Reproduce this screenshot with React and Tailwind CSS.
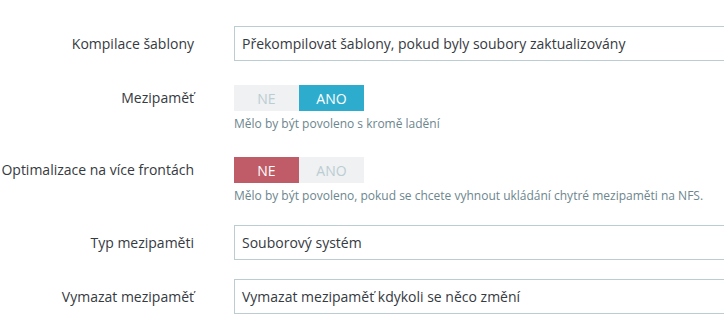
const ToggleSwitch = ({ value }) => {
  const on = value === 'ANO';
  return (
    <div className="flex h-[26px] w-[130px]">
      <span
        className={`flex w-[65px] items-center justify-center text-[14px] ${
          on ? 'bg-[#eff1f2] text-[#bbcdd2]' : 'bg-[#c05c67] text-white'
        }`}
      >
        NE
      </span>
      <span
        className={`flex w-[65px] items-center justify-center text-[14px] ${
          on ? 'bg-[#2eacce] text-white' : 'bg-[#eff1f2] text-[#bbcdd2]'
        }`}
      >
        ANO
      </span>
    </div>
  );
};

const TextField = ({ value }) => (
  <div className="flex h-[35px] w-[540px] shrink-0 items-center border border-[#bbcdd2] bg-white px-[7px] text-[14px] text-[#363a41]">
    {value}
  </div>
);

const Label = ({ children, className = '' }) => (
  <div className={`w-[194px] shrink-0 text-right text-[14px] text-[#363a41] ${className}`}>
    {children}
  </div>
);

export default function App() {
  return (
    <div className="h-[324px] w-[724px] overflow-hidden bg-white pt-[26px] font-['Open_Sans',sans-serif]">
      <div className="flex items-center gap-[40px]">
        <Label>Kompilace šablony</Label>
        <TextField value="Překompilovat šablony, pokud byly soubory zaktualizovány" />
      </div>

      <div className="mt-[24px] flex items-start gap-[40px]">
        <Label className="leading-[26px]">Mezipaměť</Label>
        <div>
          <ToggleSwitch value="ANO" />
          <p className="mt-[5px] text-[12px] leading-[16px] text-[#6c868e]">
            Mělo by být povoleno s kromě ladění
          </p>
        </div>
      </div>

      <div className="mt-[25px] flex items-start gap-[40px]">
        <Label className="leading-[26px]">Optimalizace na více frontách</Label>
        <div>
          <ToggleSwitch value="NE" />
          <p className="mt-[5px] whitespace-nowrap text-[12px] leading-[16px] text-[#6c868e]">
            Mělo by být povoleno, pokud se chcete vyhnout ukládání chytré mezipaměti na NFS.
          </p>
        </div>
      </div>

      <div className="mt-[21px] flex items-center gap-[40px]">
        <Label>Typ mezipaměti</Label>
        <TextField value="Souborový systém" />
      </div>

      <div className="mt-[19px] flex items-center gap-[40px]">
        <Label>Vymazat mezipaměť</Label>
        <TextField value="Vymazat mezipaměť kdykoli se něco změní" />
      </div>
    </div>
  );
}
